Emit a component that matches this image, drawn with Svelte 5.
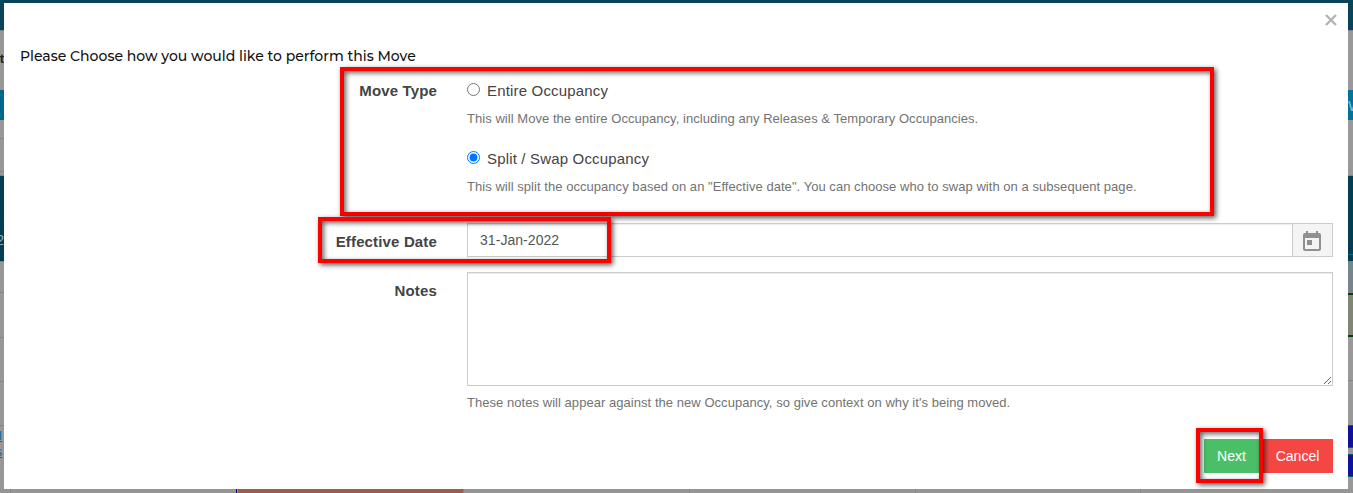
<script>
  const choices = [
    { id: 'entire', label: 'Entire Occupancy', help: 'This will Move the entire Occupancy, including any Releases & Temporary Occupancies.' },
    { id: 'split', label: 'Split / Swap Occupancy', help: 'This will split the occupancy based on an "Effective date". You can choose who to swap with on a subsequent page.' }
  ];
  let selected = $state('split');
  let date = $state('31-Jan-2022');
  let notes = $state('');

  const left = [
    [27, '#0a4459'], [1, '#858585'], [17, '#999795'], [20, '#999795', 't', 'dark'], [22, '#999795'], [30, '#00688f'],
    [18, '#999795'], [1, '#858585'], [32, '#999795'], [1, '#858585'], [3, '#999795'], [1, '#858585'],
    [55, '#023e52'], [18, '#023e52', '2', 'light'], [12, '#023e52'], [1, '#858585'],
    [30, '#999795'], [1, '#858585'], [44, '#999795'], [1, '#858585'], [43, '#999795'], [1, '#858585'],
    [43, '#999795'], [1, '#858585'], [2, '#999795'], [14, '#999795', 'l', 'link'], [2, '#999795'], [14, '#999795', 's', 'link'], [31, '#999795']
  ];
  const right = [
    [27, '#0a4459'], [1, '#858585'], [59, '#999'], [30, '#00729b', 'W', 'white'],
    [55, '#999'], [1, '#858585'], [78, '#023e52'], [1, '#00688f'], [6, '#023e52'],
    [31, '#75858e'], [1, '#858585'], [2, '#064006'], [40, '#7f8774'], [2, '#064006'], [43, '#999'], [1, '#858585'],
    [44, '#999'], [1, '#08596b'], [21, '#11119a'], [1, '#08596b'], [6, '#999'], [1, '#08596b'], [21, '#11119a'], [1, '#08596b'], [15, '#999']
  ];
</script>

{#snippet strip(rows)}
  <div class="strip">
    {#each rows as row}
      <div class={row[3] ?? 'plain'} style="height: {row[0]}px; background: {row[1]}">{row[2] ?? ''}</div>
    {/each}
  </div>
{/snippet}

<div class="page">
  <div class="top"></div>
  {@render strip(left)}
  <form class="modal" onsubmit={(e) => e.preventDefault()}>
    <header>
      <button class="close" type="button" aria-label="Close">
        <svg width="12" height="12" viewBox="0 0 12 12"><path d="M1 1l10 10M11 1l-10 10" stroke="#b3b3b3" stroke-width="2.3" /></svg>
      </button>
    </header>
    <h4><span>Please Choose how you would like to perform this Move</span></h4>
    <div class="row types">
      <div class="label"><span>Move Type</span></div>
      <div class="choices">
        {#each choices as c}
          <div class="choice">
            <label><input type="radio" name="type" value={c.id} bind:group={selected} /><span>{c.label}</span></label>
            <p><span>{c.help}</span></p>
          </div>
        {/each}
      </div>
    </div>
    <div class="row date">
      <label class="label" for="date"><span>Effective Date</span></label>
      <div class="group">
        <input id="date" type="text" bind:value={date} />
        <button class="addon" type="button" aria-label="Choose date">
          <svg width="18" height="20" viewBox="0 0 18 20"><path fill="#909090" fill-rule="evenodd" d="M3 0h2v2h8V0h2v2h1a2 2 0 0 1 2 2v14a2 2 0 0 1-2 2H2a2 2 0 0 1-2-2V4a2 2 0 0 1 2-2h1zM2 7v11h14V7zM4 9h5v5H4z" /></svg>
        </button>
      </div>
    </div>
    <div class="row notes">
      <label class="label" for="notes"><span>Notes</span></label>
      <div>
        <textarea id="notes" bind:value={notes}></textarea>
        <p><span>These notes will appear against the new Occupancy, so give context on why it's being moved.</span></p>
      </div>
    </div>
    <footer><button class="next">Next</button><button class="cancel" type="button">Cancel</button></footer>
  </form>
  {@render strip(right)}
  <div class="bottom"></div>
  <div class="mark m1"></div>
  <div class="mark m2"></div>
  <div class="mark m3"></div>
</div>

<style>
  :global(body) { margin: 0; overflow: hidden; }
  .page {
    position: relative; display: grid; box-sizing: border-box;
    width: 1353px; height: 493px; overflow: hidden;
    grid-template: 3px 486px 4px / 4px 1344px 5px;
    font-family: "Liberation Sans", Arial, sans-serif; font-size: 15px; color: #444;
  }
  .top { grid-column: 1 / -1; background: #0a4459; }
  .bottom {
    grid-column: 1 / -1;
    background: linear-gradient(to right, #959595 10px, #858585 10px 11px, #959595 11px 236px, #00005f 236px 237px, #959595 237px 238px, #986047 238px 463px, #858585 463px 464px, #959595 464px 689px, #858585 689px 690px, #959595 690px 915px, #858585 915px 916px, #959595 916px 1140px, #858585 1140px 1141px, #959595 1141px);
  }
  .strip { overflow: hidden; }
  .strip > div { display: flex; align-items: center; overflow: hidden; }
  .dark { justify-content: flex-end; color: #222; font-weight: bold; font-size: 13px; }
  .light { justify-content: flex-end; color: #9ba9af; font-size: 14px; }
  .link { justify-content: flex-end; color: #00719c; font-size: 13px; text-decoration: underline; padding-right: 2px; }
  .white { color: #8fbccb; font-size: 15px; }
  .modal { display: flex; flex-direction: column; margin: 0; padding: 0 15px 16px; background: #fff; }
  button { border: 0; margin: 0; padding: 0; font: inherit; }
  header { display: flex; justify-content: flex-end; height: 43px; }
  .close { background: none; width: 14px; height: 34px; margin-right: -5px; display: flex; align-items: center; justify-content: center; }
  h4 { margin: 0; height: 21px; font: 500 14px/20px Montserrat, Inter, sans-serif; color: #111; padding-left: 1px; }
  .row { display: grid; grid-template-columns: 418px 866px; column-gap: 30px; }
  .label { text-align: right; font-weight: bold; line-height: 20px; letter-spacing: 0.15px; }
  .types { padding-top: 14px; height: 142px; }
  .choice { height: 68px; }
  .choice label { display: flex; align-items: center; height: 20px; letter-spacing: 0.17px; }
  .choice label span { position: relative; top: -1px; }
  .choice input { width: 13px; height: 13px; margin: -3px 7px 0 0; }
  p { margin: 0; font-size: 13px; line-height: 18px; letter-spacing: 0.045px; color: #737373; }
  .choice p { padding-top: 9px; }
  .date { height: 49px; }
  .date .label { padding-top: 9px; }
  .group { display: flex; height: 34px; }
  .group input { box-sizing: border-box; width: 826px; border: 1px solid #ccc; padding: 0 12px; font: 14px "Liberation Sans", Arial, sans-serif; letter-spacing: 0.05px; color: #555; background: #fff; box-shadow: inset 0 1px 1px rgba(0,0,0,.075); }
  .addon { box-sizing: border-box; width: 40px; border: 1px solid #ccc; border-left: 0; background: #f4f4f4; display: flex; align-items: center; justify-content: center; padding: 2px 1px 0 0; }
  .notes { flex: 1; }
  .notes .label { padding-top: 9px; }
  textarea { box-sizing: border-box; display: block; width: 866px; height: 114px; border: 1px solid #ccc; background: #fff; box-shadow: inset 0 1px 1px rgba(0,0,0,.075); }
  .notes p { padding-top: 8px; }
  footer { display: flex; justify-content: flex-end; }
  footer button { height: 34px; color: #fff; font-size: 14px; }
  .next { width: 58px; background: #4bbf68; padding-right: 3px; }
  .cancel { width: 71px; background: #f44743; }
  .mark { position: absolute; box-sizing: border-box; border: 4px solid #fe0000; pointer-events: none; box-shadow: 2px 2px 5px rgba(0,0,0,.65), inset 2px 2px 5px rgba(0,0,0,.6); }
  .m1 { left: 340px; top: 67px; width: 874px; height: 149px; }
  .m2 { left: 318px; top: 217px; width: 293px; height: 46px; }
  .m3 { left: 1196px; top: 428px; width: 67px; height: 55px; }
</style>
